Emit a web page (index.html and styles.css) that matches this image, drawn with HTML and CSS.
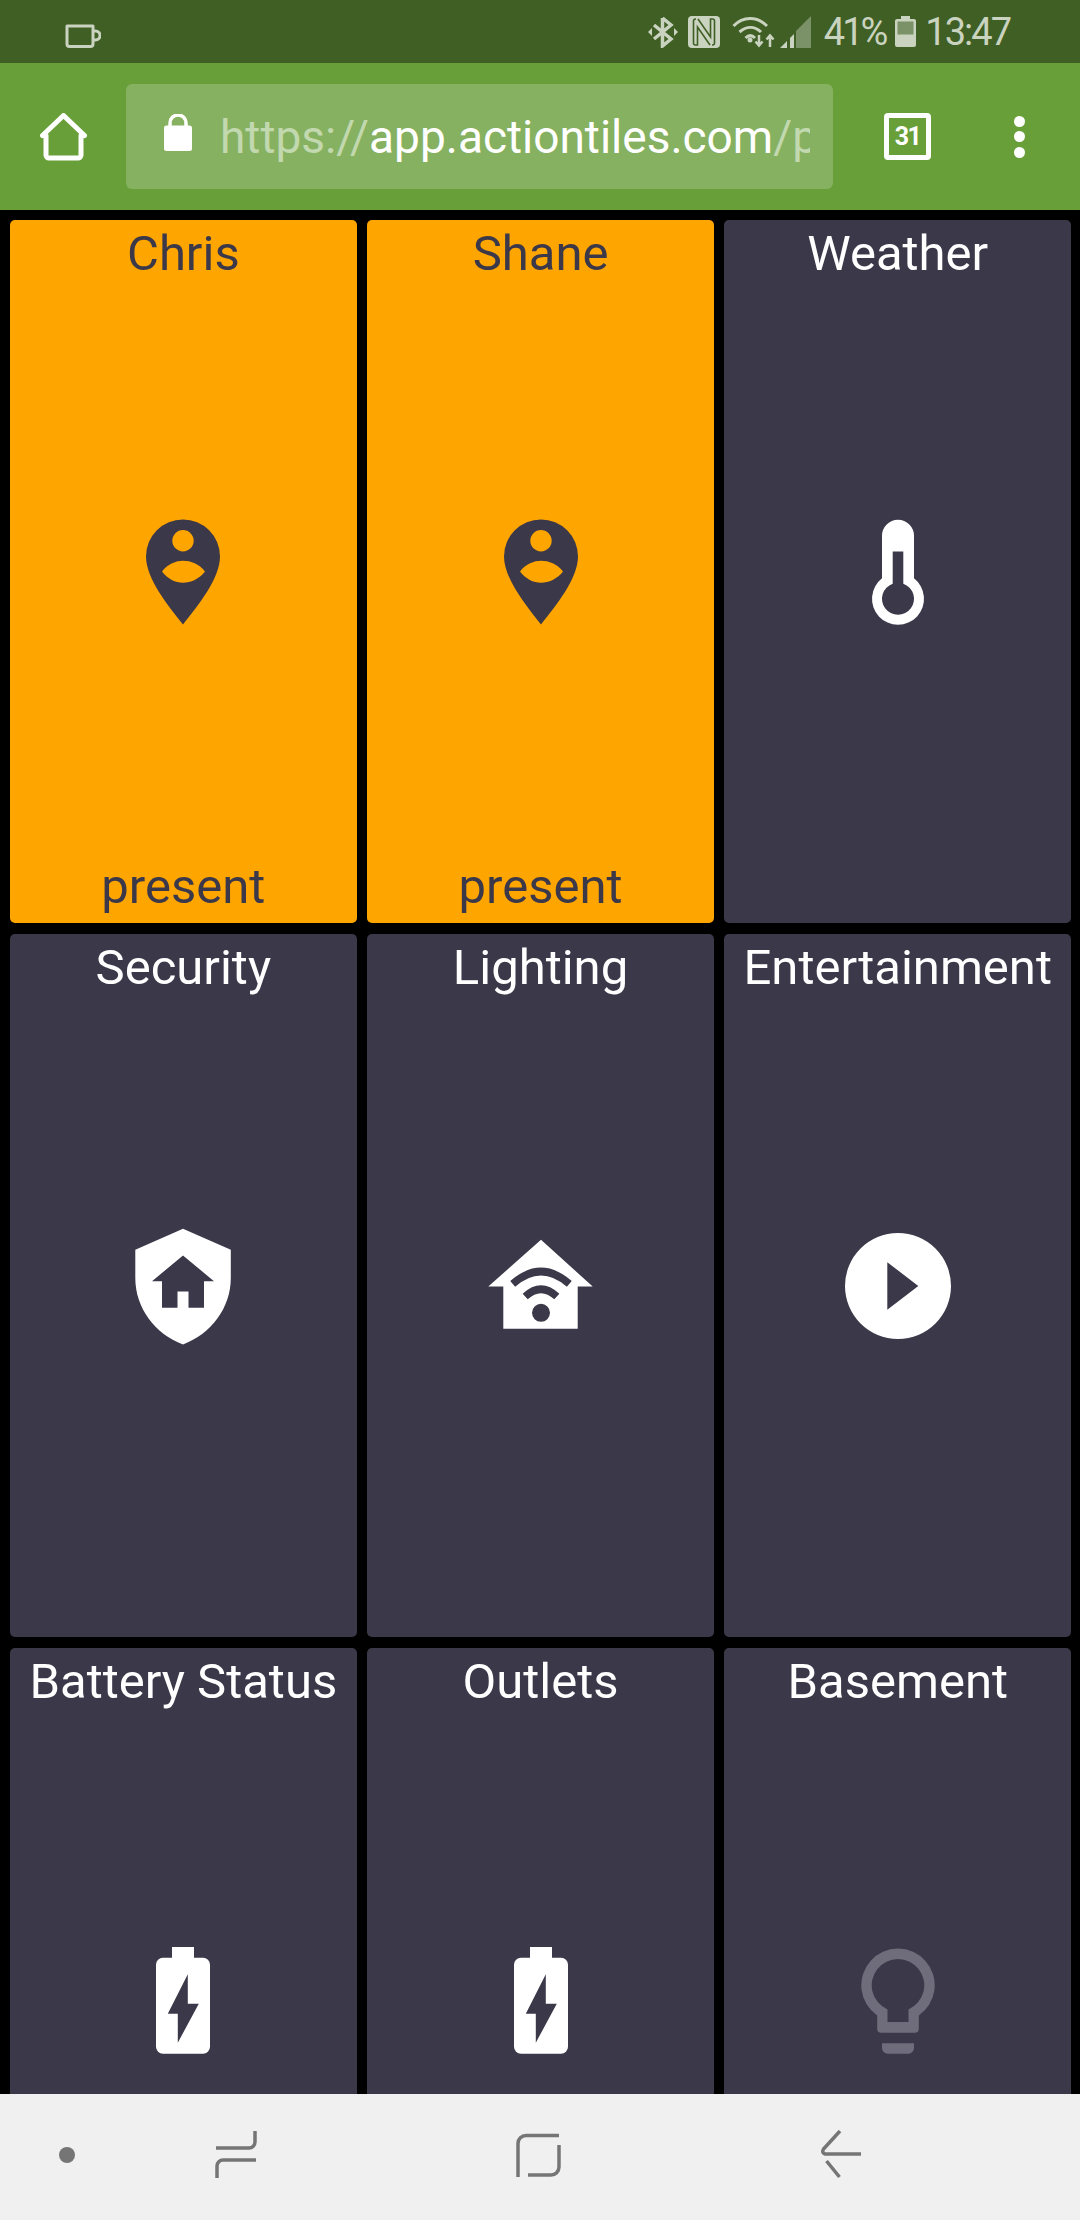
FILE: index.html
```html
<!DOCTYPE html>
<html lang="en">
<head>
<meta charset="utf-8">
<title>ActionTiles</title>
<link rel="stylesheet" href="styles.css">
</head>
<body>
<div class="phone">
  <header class="status">
    <svg class="cup" viewBox="0 0 36 24"><path d="M2 2h26v18a2.500 2.500 0 0 1-2.500 2.500h-21A2.500 2.500 0 0 1 2 20zM28 7h2.500a3.500 3.500 0 0 1 0 9H28" fill="none" stroke="#c9d3bf" stroke-width="3" stroke-linejoin="round"/></svg>
    <div class="status-right">
      <svg class="st-bt" viewBox="0 0 30 32"><path d="M14.500 2v28l8.500-7L6 9M14.500 2L23 9 6 23" fill="none" stroke="#c9d3bf" stroke-width="3.500"/><path d="M0 16l4-4v8zM30 16l-4-4v8z" fill="#c9d3bf"/></svg>
      <svg class="st-nfc" viewBox="0 0 32 32"><rect width="32" height="32" rx="4" fill="#c9d3bf"/><path d="M8 3H7.500a2 2 0 0 0-2 2v22a2 2 0 0 0 2 2h2V11L22 29M24 29h.5a2 2 0 0 0 2-2V5a2 2 0 0 0-2-2h-2v18L10 3" fill="none" stroke="#3f5f24" stroke-width="1.600"/></svg>
      <svg class="st-wifi" viewBox="0 0 43 32"><path d="M1.500 10C11 0 25 0 35 10M7.500 16c7-6 15-6 21.500 0M13.500 22c3-3 6.500-3 9.500 0" fill="none" stroke="#c9d3bf" stroke-width="3"/><circle cx="18" cy="24" r="2.500" fill="#c9d3bf"/><path d="M27 19v10M23.500 25.500l3.500 4 3.500-4M38 31V20M34.500 23.500l3.500-4 3.500 4" fill="none" stroke="#c9d3bf" stroke-width="2.500"/></svg>
      <svg class="st-signal" viewBox="0 0 31 32"><path d="M31 0v32H16V15z" fill="#7b9269"/><path d="M0 32L7 25v7zM10 22l4-4v14h-4z" fill="#c9d3bf"/></svg>
      <span class="st-text st-pct">41%</span>
      <svg class="st-batt" viewBox="0 0 21 31"><path d="M6 0h9v3h4a2 2 0 0 1 2 2v24a2 2 0 0 1-2 2H2a2 2 0 0 1-2-2V5a2 2 0 0 1 2-2h4z" fill="#c9d3bf"/><rect x="2.500" y="5.500" width="16" height="13" fill="#7b9269"/></svg>
      <span class="st-text st-time">13:47</span>
    </div>
  </header>

  <nav class="toolbar">
    <svg class="tb-home" viewBox="0 0 47 48"><path d="M6 22.500V42a3 3 0 0 0 3 3h29a3 3 0 0 0 3-3V22.500M2.500 22.500L23.500 2.500l21 20" fill="none" stroke="#fff" stroke-width="5" stroke-linejoin="round" stroke-linecap="round"/></svg>
    <div class="urlbar">
      <svg class="lock" viewBox="0 0 28 37"><path d="M6 12V9a8 8 0 0 1 16 0v3" fill="none" stroke="#fff" stroke-width="3.500"/><rect y="11.500" width="28" height="25.500" rx="2.500" fill="#fff"/></svg>
      <div class="url"><span class="dim">https://</span>app.actiontiles.com<span class="dim">/p</span></div>
    </div>
    <div class="tabs">31</div>
    <div class="menu"><i></i><i></i><i></i></div>
  </nav>

  <main class="grid">
    <section class="tile on">
      <h2 class="title">Chris</h2>
      <svg class="icon" viewBox="0 0 140 140"><path class="ink" fill-rule="evenodd" d="M70 17.500a37 37 0 0 1 37 37c0 22-22 49-37 68c-15-19-37-46-37-68a37 37 0 0 1 37-37zM70 28a10.700 10.700 0 1 0 0 21.400a10.700 10.700 0 0 0 0-21.400zM49 69.500C55 62 63 58.800 70 58.800C78 58.800 86 62 92 69.500C86 77 78 80.800 70 80.800C62 80.800 55 77 49 69.500z"/></svg>
      <p class="state">present</p>
    </section>
    <section class="tile on">
      <h2 class="title">Shane</h2>
      <svg class="icon" viewBox="0 0 140 140"><path class="ink" fill-rule="evenodd" d="M70 17.500a37 37 0 0 1 37 37c0 22-22 49-37 68c-15-19-37-46-37-68a37 37 0 0 1 37-37zM70 28a10.700 10.700 0 1 0 0 21.400a10.700 10.700 0 0 0 0-21.400zM49 69.500C55 62 63 58.800 70 58.800C78 58.800 86 62 92 69.500C86 77 78 80.800 70 80.800C62 80.800 55 77 49 69.500z"/></svg>
      <p class="state">present</p>
    </section>
    <section class="tile">
      <h2 class="title">Weather</h2>
      <svg class="icon" viewBox="0 0 140 140"><path class="ink" fill-rule="evenodd" d="M54 33.800a16 16 0 0 1 32 0V76.300A26 26 0 1 1 54 76.300zM64.700 49.500H75.300V81.700A16 16 0 1 1 64.700 81.700z"/></svg>
    </section>
    <section class="tile">
      <h2 class="title">Security</h2>
      <svg class="icon" viewBox="0 0 140 140"><path class="ink" fill-rule="evenodd" d="M70 12.800L117.800 33.800V62C117.800 92 98 118 70 128.500C42 118 22.300 92 22.300 62V33.800zM70 39.500L39 65.200H49V91.800H64.500V75.500H75.500V91.800H91V65.200H101z"/></svg>
    </section>
    <section class="tile">
      <h2 class="title">Lighting</h2>
      <svg class="icon" viewBox="0 0 140 140"><path class="ink" fill-rule="evenodd" d="M70 23.800L121.700 70.500H106.700V112.800H32.300V70.500H17.300zM70 87.800a9 9 0 1 0 0 18a9 9 0 0 0 0-18z"/><path class="cut" d="M41.700 67.800Q70 43.200 98.300 67.800M54.200 80.500Q70 65.900 85.800 80.500"/></svg>
    </section>
    <section class="tile">
      <h2 class="title">Entertainment</h2>
      <svg class="icon" viewBox="0 0 140 140"><path class="ink" fill-rule="evenodd" d="M70 17a53 53 0 1 0 0 106a53 53 0 0 0 0-106zM59.300 46.200L90.300 70L59.300 93.800z"/></svg>
    </section>
    <section class="tile">
      <h2 class="title">Battery Status</h2>
      <svg class="icon" viewBox="0 0 140 140"><path class="ink" fill-rule="evenodd" d="M59 17H81V27.700H90A7 7 0 0 1 97 34.700V116.700A7 7 0 0 1 90 123.700H50A7 7 0 0 1 43 116.700V34.700A7 7 0 0 1 50 27.700H59zM74.800 44.300L54.800 83.700H64.800V112.700L85.800 73.700H74.800z"/></svg>
    </section>
    <section class="tile">
      <h2 class="title">Outlets</h2>
      <svg class="icon" viewBox="0 0 140 140"><path class="ink" fill-rule="evenodd" d="M59 17H81V27.700H90A7 7 0 0 1 97 34.700V116.700A7 7 0 0 1 90 123.700H50A7 7 0 0 1 43 116.700V34.700A7 7 0 0 1 50 27.700H59zM74.800 44.300L54.800 83.700H64.800V112.700L85.800 73.700H74.800z"/></svg>
    </section>
    <section class="tile">
      <h2 class="title">Basement</h2>
      <svg class="icon" viewBox="0 0 140 140"><path class="ink off" fill-rule="evenodd" d="M49.200 85.500A36.700 36.700 0 1 1 90.800 85.500V98.700a4 4 0 0 1-4 4H53.200a4 4 0 0 1-4-4zM59.500 79.400A26.300 26.300 0 1 1 80.500 79.400V92H59.500z"/><path class="ink off" d="M54 113.300H86V118a5.700 5.700 0 0 1-5.700 5.700H59.700A5.700 5.700 0 0 1 54 118z"/></svg>
    </section>
  </main>

  <footer class="navbar">
    <svg class="nav-icon" viewBox="0 0 50 50"><circle cx="25" cy="25" r="8" fill="#757575"/></svg>
    <svg class="nav-icon" viewBox="0 0 50 50"><path class="nav-line" d="M44 1V12a6 6 0 0 1-6 6H5M45 30H12a6 6 0 0 0-6 6V48"/></svg>
    <svg class="nav-icon" viewBox="0 0 50 50"><path class="nav-line" d="M46 5.500H13a8 8 0 0 0-8 8V47M46 15V37a8 8 0 0 1-8 8H15"/></svg>
    <svg class="nav-icon" viewBox="0 0 50 50"><path class="nav-line" d="M24 1L7.500 19q-2 4 1.500 5H45M10.500 31l13 16"/></svg>
  </footer>
</div>
</body>
</html>
```
FILE: styles.css
```css
* { box-sizing: border-box; }
html, body { margin: 0; padding: 0; background: #000; }
body { font-family: Roboto, "Liberation Sans", sans-serif; }

.phone {
  width: 1080px;
  height: 2220px;
  display: flex;
  flex-direction: column;
  overflow: hidden;
  background: #000;
}

.status {
  height: 63px;
  flex: none;
  background: #3f5f24;
  display: flex;
  align-items: center;
  justify-content: space-between;
  padding: 0 70px 0 65px;
  color: #c9d3bf;
}
.cup { width: 36px; height: 24px; margin-top: 8px; }
.status-right { display: flex; align-items: center; }
.st-bt { width: 30px; height: 32px; }
.st-nfc { width: 32px; height: 32px; margin-left: 10px; }
.st-wifi { width: 43px; height: 32px; margin-left: 12px; }
.st-signal { width: 31px; height: 32px; margin-left: 5px; }
.st-text { font-size: 38px; line-height: 40px; letter-spacing: -2px; display: block; }
.st-pct { margin-left: 13px; letter-spacing: -3px; }
.st-batt { width: 21px; height: 31px; margin-left: 10px; }
.st-time { margin-left: 9px; }

.toolbar {
  height: 147px;
  flex: none;
  background: #689f38;
  display: flex;
  align-items: center;
  padding-left: 40px;
}
.tb-home { width: 47px; height: 48px; flex: none; }
.urlbar {
  width: 707px;
  height: 105px;
  flex: none;
  margin-left: 39px;
  background: #86b160;
  border-radius: 6px;
  display: flex;
  align-items: center;
  padding-left: 38px;
}
.lock { width: 28px; height: 37px; flex: none; margin-top: -8px; }
.url {
  width: 590px;
  margin-left: 28px;
  overflow: hidden;
  white-space: nowrap;
  font-size: 46px;
  line-height: 60px;
  color: #fff;
}
.dim { color: rgba(255, 255, 255, .5); }
.tabs {
  width: 47px;
  height: 47px;
  flex: none;
  margin-left: 51px;
  border: 5px solid #fff;
  border-radius: 4px;
  color: #fff;
  font-size: 25px;
  font-weight: 700;
  letter-spacing: -1.500px;
  line-height: 37px;
  text-align: center;
}
.menu {
  flex: none;
  margin-left: 83px;
  display: flex;
  flex-direction: column;
  gap: 4.500px;
}
.menu i { display: block; width: 11px; height: 11px; border-radius: 50%; background: #fff; }

.grid {
  flex: 1;
  min-height: 0;
  overflow: hidden;
  display: grid;
  grid-template-columns: repeat(3, 346.700px);
  grid-auto-rows: 703px;
  gap: 11px 10.500px;
  padding: 10px 0 0 10px;
  align-content: start;
}
.tile {
  background: #3b3849;
  color: #fff;
  border-radius: 5px;
  display: grid;
  grid-template-rows: 1fr auto 1fr;
  justify-items: center;
}
.tile.on { background: #ffa500; color: #3b3849; }
.title, .state {
  margin: 0;
  font-size: 49px;
  font-weight: 400;
  line-height: 68px;
  white-space: nowrap;
}
.state { align-self: end; margin-bottom: 2px; }
.icon { width: 140px; height: 140px; display: block; }
.ink { fill: #fff; }
.on .ink { fill: #3b3849; }
.ink.off { fill: #6f6d7b; }
.cut { fill: none; stroke: #3b3849; stroke-width: 7.500; }

.navbar {
  height: 126px;
  flex: none;
  background: #f0f0f0;
  display: grid;
  grid-template-columns: 169px 302px 303px 50px;
  align-items: center;
  padding: 0 0 4px 42px;
}
.nav-icon { width: 50px; height: 50px; display: block; }
.nav-line { fill: none; stroke: #757575; stroke-width: 3.500; }
```
